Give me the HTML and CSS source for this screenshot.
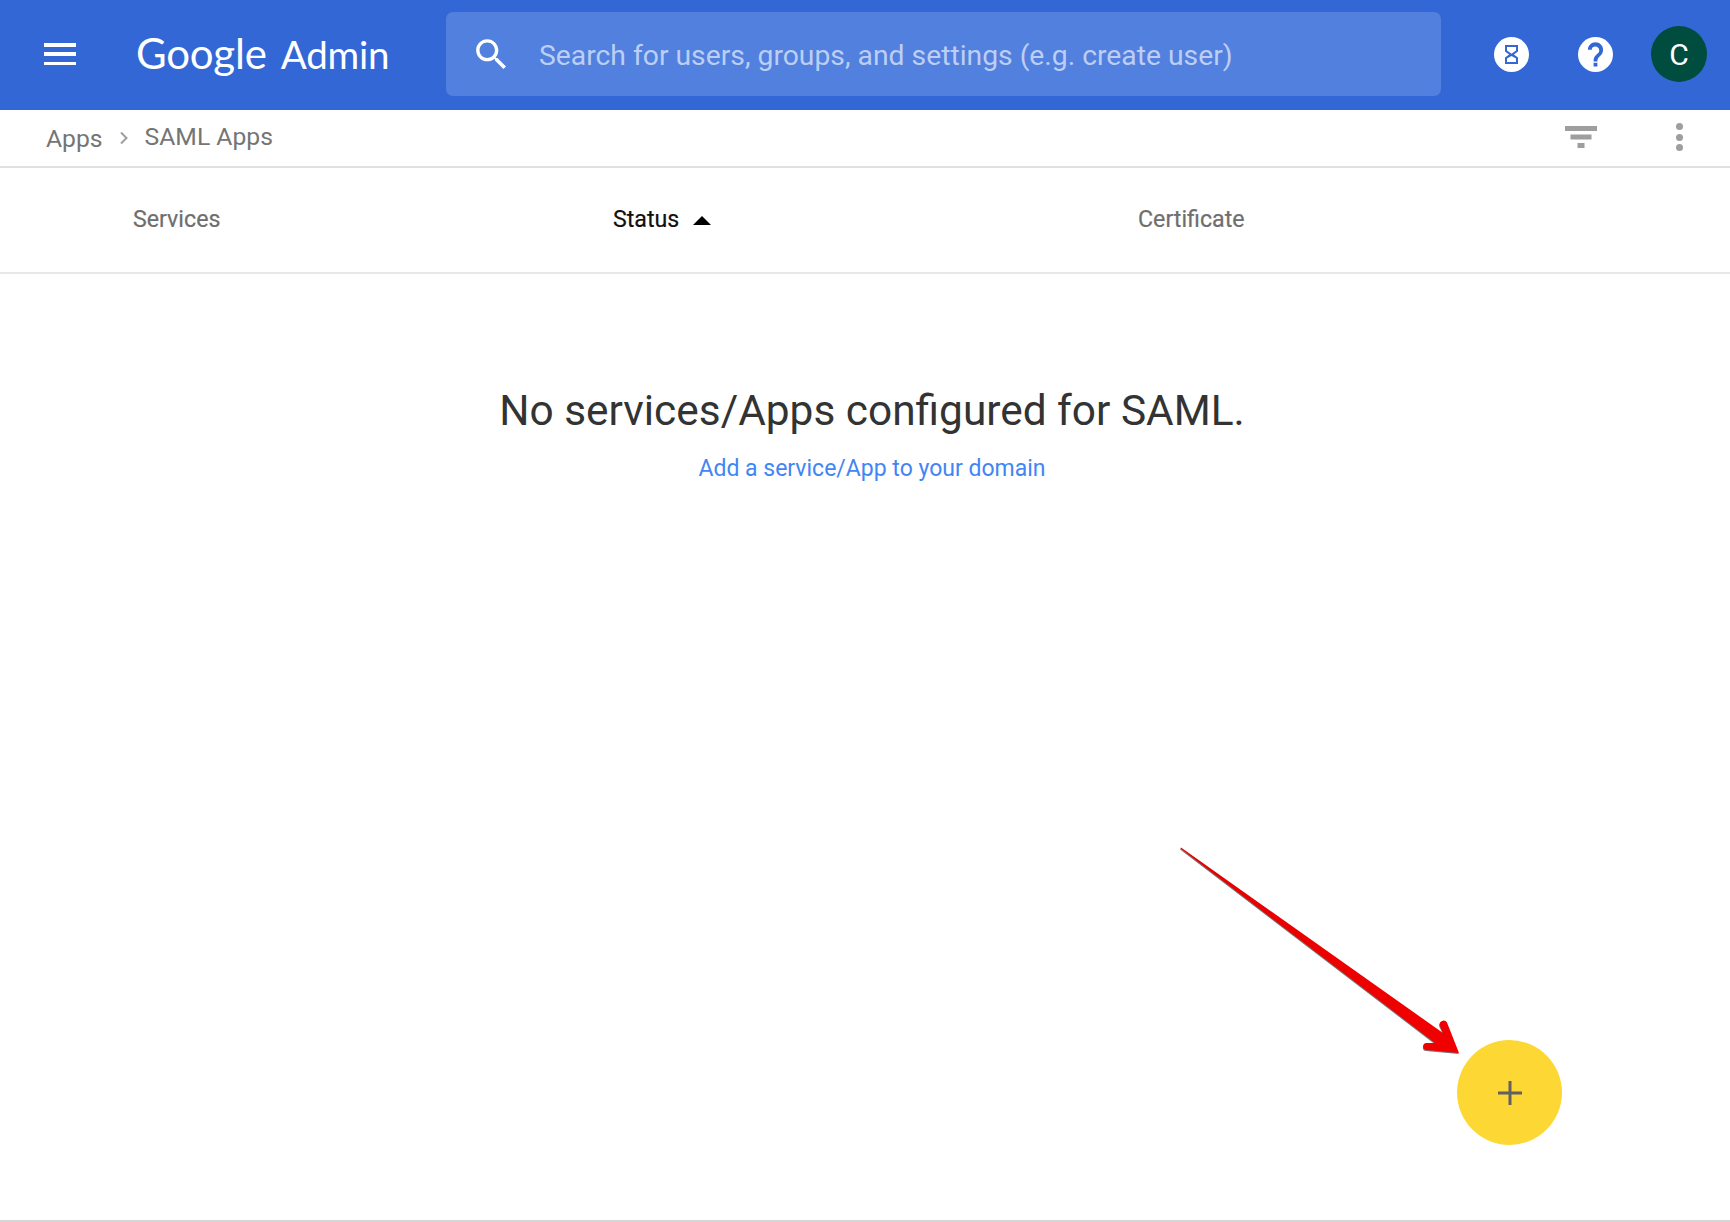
FILE: index.html
```html
<!DOCTYPE html>
<html lang="en">
<head>
<meta charset="utf-8">
<title>SAML Apps - Google Admin</title>
<link rel="stylesheet" href="styles.css">
</head>
<body>
<div class="page">
  <header class="topbar">
    <button class="menu" aria-label="Main menu"><span></span><span></span><span></span></button>
    <div class="logo"><span class="logo-google">Google</span><span class="logo-admin">Admin</span></div>
    <div class="search">
      <svg class="search-icon" viewBox="0 0 24 24"><path d="M15.5 14h-.79l-.28-.27C15.41 12.59 16 11.11 16 9.5 16 5.91 13.09 3 9.5 3S3 5.91 3 9.5 5.91 16 9.5 16c1.61 0 3.09-.59 4.23-1.57l.27.28v.79l5 4.99L20.49 19l-4.99-5zm-6 0C7.01 14 5 11.99 5 9.5S7.01 5 9.5 5 14 7.01 14 9.5 11.99 14 9.5 14z"/></svg>
      <span class="search-text">Search for users, groups, and settings (e.g. create user)</span>
    </div>
    <div class="top-actions">
      <span class="round-icon">
        <svg viewBox="0 0 35 35"><circle cx="17.5" cy="17.5" r="17.5" fill="#fff"/><path fill="#3367d6" d="M11 8h13v6.4L19.9 17.5l4.1 3.1V27H11v-6.4l4.1-3.1L11 14.4zm2 2v3.4l4.5 3.4 4.5-3.4V10zm4.5 8.9L13 21.6V25h9v-3.4z"/></svg>
      </span>
      <span class="round-icon">
        <svg viewBox="0 0 24 24"><path fill="#fff" d="M12 0a12 12 0 1 0 0 24 12 12 0 0 0 0-24z"/><path fill="#3367d6" d="M13.3 19.3h-2.6v-2.6h2.6zm2.7-8.1l-1.2 1.2c-.9.9-1.5 1.6-1.5 3.4h-2.6v-.6c0-1.4.6-2.7 1.5-3.6l1.6-1.6c.5-.5.8-1.1.8-1.8 0-1.4-1.2-2.6-2.6-2.6S9.4 6.400 9.400 7.800H6.800c0-2.900 2.300-5.200 5.200-5.200s5.200 2.300 5.200 5.200c0 1.300-.5 2.500-1.200 3.400z" transform="translate(0 1)"/></svg>
      </span>
      <span class="avatar">C</span>
    </div>
  </header>

  <nav class="crumbs">
    <span class="crumb-root">Apps</span>
    <svg class="crumb-sep" viewBox="0 0 10 14"><path d="M2 1.500 7.500 7 2 12.500" fill="none" stroke="#9e9e9e" stroke-width="2"/></svg>
    <span class="crumb-current">SAML Apps</span>
    <div class="crumb-tools">
      <svg class="filter" viewBox="0 0 32 22"><path d="M0 0h32v5H0zM5.500 8.500h21v5h-21zM12.500 17h7v5h-7z"/></svg>
      <span class="dots"><i></i><i></i><i></i></span>
    </div>
  </nav>

  <div class="columns">
    <span class="col">Services</span>
    <span class="col col-active">Status <i class="sort-up"></i></span>
    <span class="col">Certificate</span>
  </div>

  <main class="empty">
    <h1 class="empty-title">No services/Apps configured for SAML.</h1>
    <a class="empty-link" href="#">Add a service/App to your domain</a>
  </main>
</div>

<svg class="arrow" viewBox="0 0 300 225" aria-hidden="true">
  <defs>
    <linearGradient id="arrowfill" x1="0" y1="0" x2="1" y2="1">
      <stop offset="0" stop-color="#e60000"/>
      <stop offset="1" stop-color="#f20000"/>
    </linearGradient>
  </defs>
  <path fill="#777" d="M11 7.500 273 193 269.700 185.500A4 4 0 0 1 277 182.500L289 213 256.500 210A3.500 3.500 0 0 1 257 203L265 203 10.500 8.500Z" transform="translate(-.4 1)"/>
  <path fill="url(#arrowfill)" d="M11 7.500 273 193 269.700 185.500A4 4 0 0 1 277 182.500L289 213 256.500 210A3.500 3.500 0 0 1 257 203L265 203 10.500 8.500Z"/>
</svg>
<button class="fab" aria-label="Add"><svg viewBox="0 0 24 24"><path d="M10.500 0h3v10.500H24v3H13.500V24h-3V13.500H0v-3h10.500z"/></svg></button>
</body>
</html>
```

FILE: styles.css
```css
* { box-sizing: border-box; }
html, body { margin: 0; height: 100%; background: #fff; overflow: hidden; }
body { font-family: Roboto, "Liberation Sans", sans-serif; color: #212121; }
.page { height: 1222px; display: flex; flex-direction: column; border-bottom: 2px solid #d6d6d6; }

.topbar { height: 110px; flex: none; background: #3367d6; display: flex; align-items: center; padding: 0 23px 2px 44px; }
.menu { width: 32px; height: 22px; padding: 0; border: 0; background: none; display: flex; flex-direction: column; justify-content: space-between; }
.menu span { display: block; height: 3.500px; background: #fff; }
.logo { margin: 0 0 2px 60px; width: 310px; color: #fff; font-family: Lato, sans-serif; display: flex; align-items: baseline; gap: 14px; line-height: 1; }
.logo-google { font-size: 42px; letter-spacing: -.2px; }
.logo-admin { font-size: 38.500px; letter-spacing: -.2px; }
.search { width: 995px; height: 84px; background: #5280de; border-radius: 7px; display: flex; align-items: center; padding-left: 25px; }
.search-icon { width: 41px; height: 41px; fill: #fff; flex: none; }
.search-text { margin: 2px 0 0 27px; font-size: 28.300px; color: #bccef3; white-space: nowrap; }
.top-actions { margin-left: auto; display: flex; align-items: center; gap: 49px; }
.round-icon { width: 35px; height: 35px; display: block; }
.round-icon svg { display: block; width: 100%; height: 100%; }
.avatar { width: 56px; height: 56px; border-radius: 50%; background: #004d40; color: #fff; font-size: 30px; display: flex; align-items: center; justify-content: center; margin-left: -11px; }

.crumbs { height: 58px; flex: none; border-bottom: 2px solid #e0e0e0; display: flex; align-items: center; padding: 0 47px 2px 46px; color: #757575; font-size: 24.700px; }
.crumb-root { padding-top: 2px; }
.crumb-sep { width: 10px; height: 14px; margin: 2px 16px 0 16px; }
.crumb-current { padding-bottom: 1px; }
.crumb-tools { margin-left: auto; display: flex; align-items: center; gap: 79px; }
.filter { width: 32px; height: 22px; fill: #9e9e9e; }
.dots { display: flex; flex-direction: column; gap: 3.500px; width: 7px; }
.dots i { display: block; width: 7px; height: 7px; border-radius: 50%; background: #9e9e9e; }

.columns { height: 106px; flex: none; border-bottom: 2px solid #e8e8e8; display: grid; grid-template-columns: 480px 525px 1fr; align-items: center; padding: 0 0 2px 133px; }
.col { font-size: 23.200px; font-weight: 400; color: #6e6e6e; -webkit-text-stroke: .2px currentColor; }
.col-active { color: #111; display: flex; align-items: center; gap: 8px; }
.sort-up { width: 0; height: 0; border-left: 9px solid transparent; border-right: 9px solid transparent; border-bottom: 9px solid #000; margin-left: 6px; margin-top: 2px; }

.empty { flex: 1; display: flex; flex-direction: column; align-items: center; padding: 109px 0 0 14px; }
.empty-title { margin: 0; font-size: 42.400px; font-weight: 400; line-height: 56px; color: #333; }
.empty-link { margin-top: 16px; font-size: 23px; color: #4285f4; text-decoration: none; }

.arrow { position: absolute; left: 1170px; top: 840px; width: 300px; height: 225px; }
.fab { position: absolute; left: 1457px; top: 1040px; width: 105px; height: 105px; border: 0; padding: 0; border-radius: 50%; background: #fdd835; display: flex; align-items: center; justify-content: center; }
.fab svg { width: 24px; height: 24px; fill: #616161; }
```
